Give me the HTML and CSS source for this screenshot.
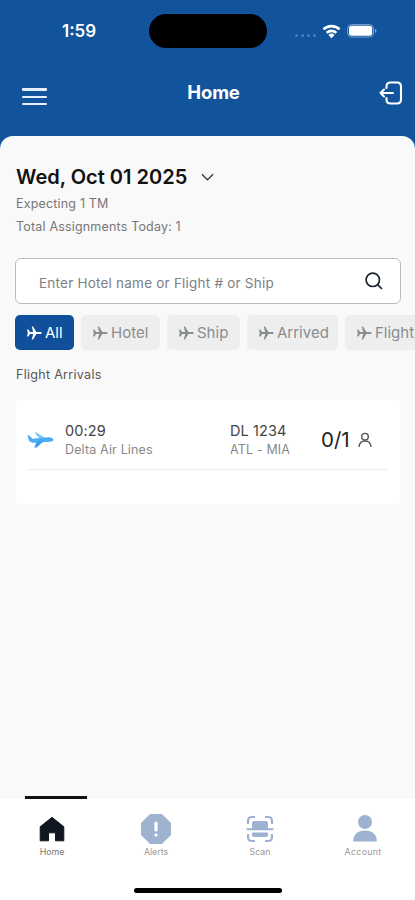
FILE: index.html
```html
<!DOCTYPE html>
<html lang="en">
<head>
<meta charset="utf-8">
<meta name="viewport" content="width=device-width, initial-scale=1">
<title>Home</title>
<link rel="stylesheet" href="styles.css">
</head>
<body>
<svg class="defs" aria-hidden="true">
  <symbol id="plane" viewBox="0 0 16 16"><path d="M1 4.600h1.300L4.200 7h3L5.700 1.500H7L10.400 7h3.300c1.200 0 2 .4 2 1s-.8 1-2 1h-3.300L7 14.500H5.700L7.200 9h-3l-1.900 2.400H1L1.800 8z"/></symbol>
</svg>
<div class="app">
  <header class="top">
    <div class="status">
      <span class="time">1:59</span>
      <span class="island"></span>
      <span class="signals">
        <span class="dots"><i></i><i></i><i></i><i></i></span>
        <svg class="wifi" viewBox="0 0 20 15"><g fill="none" stroke="#fff" stroke-width="2.700"><path d="M1.500 5.300a12.200 12.200 0 0 1 17 0"/><path d="M4.900 8.900a7.300 7.300 0 0 1 10.200 0"/></g><path fill="#fff" d="M6.800 11.200a4.600 4.600 0 0 1 6.400 0L10 14.500z"/></svg>
        <svg class="battery" viewBox="0 0 30 14"><rect x=".6" y=".6" width="26" height="12.400" rx="4" fill="none" stroke="#7ea3cf"/><rect x="2" y="1.800" width="23.200" height="10" rx="2.800" fill="#fff"/><path d="M28 4.800c2 .8 2 3.300 0 4.100z" fill="#7ea3cf"/></svg>
      </span>
    </div>
    <div class="bar">
      <span class="menu"><i></i><i></i><i></i></span>
      <h1>Home</h1>
      <svg class="logout" viewBox="0 0 24 24" fill="none" stroke="#fff" stroke-width="2.100" stroke-linecap="round" stroke-linejoin="round"><path d="M7.500 7V5.500q0-4 4-4h6.500q4 0 4 4v13q0 4-4 4h-6.500q-4 0-4-4V17M14 12H1.500M5 8.500 1.500 12 5 15.500"/></svg>
    </div>
  </header>
  <main class="sheet">
    <div class="date"><h2>Wed, Oct 01 2025</h2><svg viewBox="0 0 14 8" fill="none" stroke="#333" stroke-width="1.300"><path d="m1 1 6 6 6-6"/></svg></div>
    <p class="sub expecting">Expecting 1 TM</p>
    <p class="sub total">Total Assignments Today: 1</p>
    <div class="search"><span>Enter Hotel name or Flight # or Ship</span><svg viewBox="0 0 18 18" fill="none" stroke="#1b2432" stroke-width="1.700"><circle cx="7.800" cy="7.800" r="6.700"/><path d="m12.600 12.600 4.400 4.400"/></svg></div>
    <nav class="chips">
      <span class="chip on c-all"><svg><use href="#plane"/></svg><b>All</b></span>
      <span class="chip c-hotel"><svg><use href="#plane"/></svg><b>Hotel</b></span>
      <span class="chip c-ship"><svg><use href="#plane"/></svg><b>Ship</b></span>
      <span class="chip c-arrived"><svg><use href="#plane"/></svg><b>Arrived</b></span>
      <span class="chip c-flight"><svg><use href="#plane"/></svg><b>Flight</b></span>
    </nav>
    <h3>Flight Arrivals</h3>
    <section class="card">
      <div class="row">
        <svg class="jet" viewBox="0 0 27 17"><path fill="#78c5fa" d="M7.500 1.500h2L18 7h-6z"/><path fill="#4bacf5" d="M.5 4.300 2 4.200 5.500 7.800 21 6.300c3-.2 5.400.8 5.500 2.500 0 1.200-1.500 1.800-4 2L8 11.800c-2.500.1-5-.6-6-2z"/><path fill="#3b9bed" d="m10 10.500 6.500-.3-6.800 6.300H7.200z"/></svg>
        <div class="airline"><p class="main">00:29</p><p class="minor">Delta Air Lines</p></div>
        <div class="flight"><p class="main">DL 1234</p><p class="minor">ATL - MIA</p></div>
        <span class="count">0/1</span>
        <svg class="person" viewBox="0 0 14 16" fill="none" stroke="#555" stroke-width="1.400"><circle cx="7" cy="4.700" r="3.300"/><path d="M1 15C1.300 11.300 3.800 9 7 9s5.700 2.300 6 6"/></svg>
      </div>
    </section>
  </main>
  <footer class="tabs">
    <div class="tab active"><svg viewBox="0 0 30 30"><path fill="#101720" stroke="#101720" stroke-linejoin="round" d="M3.200 12.800 15 3.300l11.800 9.500v14h-8.300v-8h-7v8H3.200z"/></svg><span>Home</span></div>
    <div class="tab"><svg viewBox="0 0 30 30"><path fill="#9fb3d1" stroke="#9fb3d1" stroke-width="2" stroke-linejoin="round" d="M9.500 1h11L29 9.500v11L20.500 29h-11L1 20.500v-11z"/><path stroke="#fff" stroke-width="3.200" stroke-linecap="round" d="M15 9v7M15 21v.1"/></svg><span>Alerts</span></div>
    <div class="tab"><svg viewBox="0 0 30 30"><g fill="none" stroke="#a0afd0" stroke-width="2.200"><path d="M3 10V7q0-4 4-4h3M20 3h3q4 0 4 4v3M3 20v3q0 4 4 4h3M20 27h3q4 0 4-4v-3"/></g><path fill="#9cb2d0" d="M7 9q0-2 2-2h12q2 0 2 2v5.200H7zM7 18.400h16V21q0 2-2 2H9q-2 0-2-2zM1.500 14.200h27v2h-27z"/></svg><span>Scan</span></div>
    <div class="tab account"><svg viewBox="0 0 30 30"><circle cx="15" cy="8" r="7" fill="#9cb2d0"/><path fill="#9cb2d0" d="M3.200 27.500c0-7.500 5-11 11.800-11s11.800 3.500 11.800 11z"/></svg><span>Account</span></div>
    <i class="home-indicator"></i>
  </footer>
</div>
</body>
</html>
```
FILE: styles.css
```css
* { box-sizing: border-box; }
body, h1, h2, h3, p { margin: 0; }
body { font-family: Inter, "Liberation Sans", sans-serif; background: #11549b; }
svg { display: block; flex: none; }
i { display: block; }
.defs { position: absolute; width: 0; height: 0; }
.app { width: 415px; height: 900px; display: flex; flex-direction: column; overflow: hidden; }

.top { height: 136px; flex: none; color: #fff; }
.status { height: 62px; display: grid; grid-template-columns: 149px 118px 1fr; align-items: center; }
.time { padding-left: 62px; font-size: 17px; font-weight: 600; }
.island { height: 34px; border-radius: 17px; background: #000; }
.signals { display: flex; align-items: center; padding-left: 28px; }
.dots { display: flex; gap: 3px; padding-top: 9px; margin-right: 6px; }
.dots i { width: 3px; height: 3px; border-radius: 50%; background: #4b80bb; }
.wifi { width: 19px; height: 15px; margin-right: 6px; }
.battery { width: 30px; height: 14px; }
.bar { height: 62px; display: grid; grid-template-columns: 80px 1fr 80px; align-items: center; }
.menu { display: grid; gap: 5px; width: 25px; margin: 6px 0 0 22px; }
.menu i { height: 2px; background: #e8edff; border-radius: 1px; }
.menu i:first-child { height: 3px; }
h1 { text-align: center; font-size: 18.5px; font-weight: 700; letter-spacing: -.2px; padding-left: 12px; margin-top: -2px; }
.logout { width: 24px; height: 24px; margin-left: 44px; }

.sheet { flex: 1; min-height: 0; background: #f9f9f9; border-radius: 13px 13px 0 0; padding: 28px 0 0 15px; }
.date { display: flex; align-items: center; gap: 14px; height: 26px; padding-left: 1px; }
h2 { font-size: 20px; font-weight: 600; color: #111; white-space: nowrap; }
.date svg { width: 13px; height: 8px; }
.sub { font-size: 12.500px; line-height: 22px; letter-spacing: .18px; color: #777; padding-left: 1px; }
.expecting { margin-top: 3px; }
.total { padding-top: 1px; margin-bottom: -1px; }
.search { display: flex; align-items: center; justify-content: space-between; width: 386px; height: 46px; margin-top: 21px; padding: 3px 17px 0 23px; border: 1px solid #bbb; border-radius: 6px; background: #fff; color: #7c8085; font-size: 13.500px; letter-spacing: .22px; }
.search svg { width: 18px; height: 18px; margin-top: -4px; }
.chips { display: flex; gap: 7px; height: 36px; margin-top: 11px; overflow: hidden; }
.chip { display: flex; align-items: center; gap: 4px; flex: none; padding-left: 11px; height: 35px; border-radius: 5px; background: #eee; color: #888d90; font-size: 15px; }
.chip b { font-weight: 400; }
.chip svg { width: 16px; height: 16px; margin-right: -1px; fill: currentColor; }
.on { background: #10509a; color: #fff; }
.c-all { width: 59px; }
.c-hotel { width: 79px; }
.c-ship { width: 73px; }
.c-arrived { width: 91px; }
.c-flight { width: 92px; }
h3 { font-size: 12.500px; line-height: 18px; font-weight: 400; letter-spacing: .3px; color: #555; margin-top: 15px; padding-left: 1px; }
.card { width: 385px; height: 104px; margin: 16px 0 0 1px; width: 384px; padding: 0 12px 0 11px; background: #fff; border-radius: 2px; }
.row { display: grid; grid-template-columns: 38px 165px 91px 37px 1fr; align-items: center; height: 70px; padding-top: 10px; border-bottom: 1px solid #eee; white-space: nowrap; }
.jet { width: 27px; height: 17px; }
.main { font-size: 14.500px; line-height: 20px; letter-spacing: .1px; color: #444; }
.minor { font-size: 12.500px; line-height: 18px; letter-spacing: .15px; color: #888; }
.count { font-size: 20.500px; color: #222; }
.person { width: 14px; height: 16px; }

.tabs { flex: none; height: 103px; display: grid; grid-template-columns: repeat(4, 104px); grid-template-rows: 90px 6px; background: #fff; border-top: 1px solid #f4f4f4; }
.tab { display: flex; flex-direction: column; align-items: center; }
.tab::before { content: ""; width: 62px; height: 3px; margin-top: -2px; margin-left: 8px; }
.active::before { background: #111; }
.tab svg { width: 30px; height: 30px; margin-top: 15px; }
.tab span { font-size: 8.800px; line-height: 12px; color: #999; margin-top: 2px; }
.active span { color: #777; }
.account svg { margin-left: 2px; }
.account span { letter-spacing: .3px; margin-left: -2px; }
.home-indicator { grid-column: 1 / -1; width: 148px; height: 5px; border-radius: 3px; background: #000; margin-left: 134px; }
```
